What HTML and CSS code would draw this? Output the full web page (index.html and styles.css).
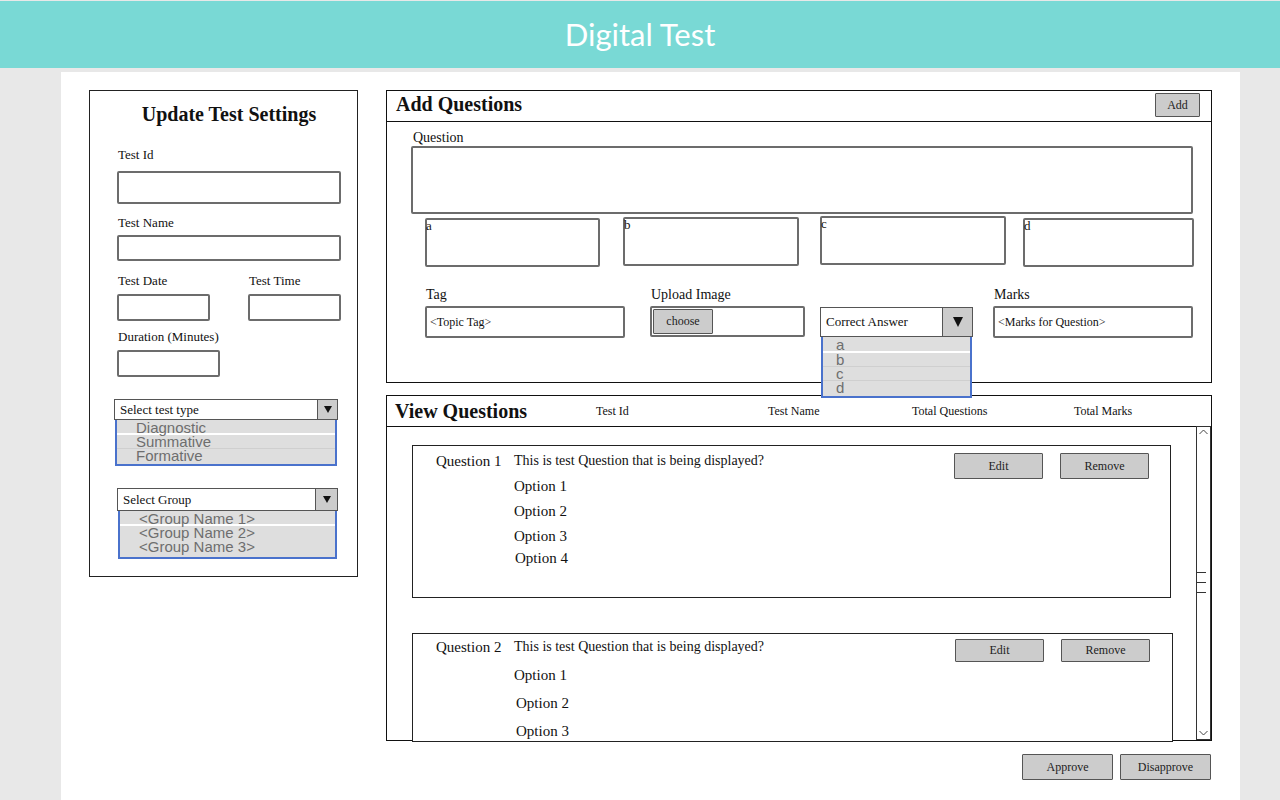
FILE: index.html
```html
<!DOCTYPE html>
<html lang="en">
<head>
<meta charset="utf-8">
<title>Digital Test</title>
<link rel="stylesheet" href="styles.css">
</head>
<body>
<header class="topbar">Digital Test</header>
<main class="page">
  <section class="settings">
    <h2 class="settings-title">Update Test Settings</h2>
    <div class="lbl lbl-id">Test Id</div>
    <div class="box box-id"></div>
    <div class="lbl lbl-name">Test Name</div>
    <div class="box box-name"></div>
    <div class="pair">
      <div class="pair-col">
        <div class="lbl">Test Date</div>
        <div class="box box-short"></div>
      </div>
      <div class="pair-col">
        <div class="lbl">Test Time</div>
        <div class="box box-short"></div>
      </div>
    </div>
    <div class="lbl lbl-dur">Duration (Minutes)</div>
    <div class="box box-dur"></div>
    <div class="select select-type"><span class="select-text">Select test type</span><span class="select-btn"><i class="tri"></i></span></div>
    <ul class="optlist optlist-type">
      <li class="split">Diagnostic</li>
      <li class="thin">Summative</li>
      <li>Formative</li>
    </ul>
    <div class="select select-group"><span class="select-text">Select Group</span><span class="select-btn"><i class="tri"></i></span></div>
    <ul class="optlist optlist-group">
      <li class="split">&lt;Group Name 1&gt;</li>
      <li>&lt;Group Name 2&gt;</li>
      <li>&lt;Group Name 3&gt;</li>
    </ul>
  </section>

  <div class="right">
    <section class="panel add">
      <div class="panel-head">
        <h2 class="panel-title">Add Questions</h2>
        <button class="btn btn-add">Add</button>
      </div>
      <div class="add-body">
        <div class="lbl-q">Question</div>
        <div class="box textarea"></div>
        <div class="opts">
          <div class="box opt opt-a">a</div>
          <div class="box opt opt-b">b</div>
          <div class="box opt opt-c">c</div>
          <div class="box opt opt-d">d</div>
        </div>
        <div class="meta">
          <div class="meta-col col-tag">
            <div class="lbl-m">Tag</div>
            <div class="box field">&lt;Topic Tag&gt;</div>
          </div>
          <div class="meta-col col-upload">
            <div class="lbl-m">Upload Image</div>
            <div class="box field upload-field"><button class="btn btn-choose">choose</button></div>
          </div>
          <div class="meta-col col-answer">
            <div class="select answer-select"><span class="select-text">Correct Answer</span><span class="select-btn big"><i class="tri tri-big"></i></span></div>
            <ul class="optlist answer-list">
              <li class="split">a</li>
              <li class="thin">b</li>
              <li class="thin">c</li>
              <li>d</li>
            </ul>
          </div>
          <div class="meta-col col-marks">
            <div class="lbl-m">Marks</div>
            <div class="box field">&lt;Marks for Question&gt;</div>
          </div>
        </div>
      </div>
    </section>

    <section class="panel view">
      <div class="panel-head view-head">
        <h2 class="panel-title">View Questions</h2>
        <span class="col-head">Test Id</span>
        <span class="col-head">Test Name</span>
        <span class="col-head">Total Questions</span>
        <span class="col-head">Total Marks</span>
      </div>
      <div class="view-body">
        <div class="view-list">
          <article class="card card-1">
            <div class="q-label">Question 1</div>
            <div class="q-main">
              <div class="q-text">This is test Question that is being displayed?</div>
              <div class="q-opt">Option 1</div>
              <div class="q-opt">Option 2</div>
              <div class="q-opt">Option 3</div>
              <div class="q-opt q-opt-last">Option 4</div>
            </div>
            <div class="q-actions">
              <button class="btn btn-card">Edit</button>
              <button class="btn btn-card">Remove</button>
            </div>
          </article>
          <article class="card card-2">
            <div class="q-label">Question 2</div>
            <div class="q-main">
              <div class="q-text">This is test Question that is being displayed?</div>
              <div class="q-opt">Option 1</div>
              <div class="q-opt q-opt-in">Option 2</div>
              <div class="q-opt q-opt-in">Option 3</div>
            </div>
            <div class="q-actions">
              <button class="btn btn-card">Edit</button>
              <button class="btn btn-card">Remove</button>
            </div>
          </article>
        </div>
        <div class="scrollbar">
          <svg class="sb-arrow" width="13" height="10" viewBox="0 0 13 10"><path d="M2.5 7 L6.5 3 L10.5 7" fill="none" stroke="#444" stroke-width="1"/></svg>
          <div class="sb-grip"><span></span><span></span><span></span></div>
          <svg class="sb-arrow sb-arrow-down" width="13" height="10" viewBox="0 0 13 10"><path d="M2.5 3 L6.5 7 L10.5 3" fill="none" stroke="#444" stroke-width="1"/></svg>
        </div>
      </div>
    </section>

    <div class="actions">
      <button class="btn btn-act">Approve</button>
      <button class="btn btn-act">Disapprove</button>
    </div>
  </div>
</main>
</body>
</html>
```

FILE: styles.css
```css
* { box-sizing: border-box; }

html, body {
  margin: 0;
  padding: 0;
}

body {
  background: #e8e8e8;
  font-family: "Liberation Serif", "Times New Roman", serif;
  color: #111;
  height: 800px;
  overflow: hidden;
}

.topbar {
  margin-top: 1px;
  height: 67px;
  background: #79d9d5;
  color: #fff;
  font-family: Lato, "Open Sans", sans-serif;
  font-size: 31px;
  line-height: 67px;
  text-align: center;
}

.page {
  width: 1179px;
  margin: 4px 0 0 61px;
  height: 732px;
  background: #fff;
  padding: 18px 28px 0 28px;
  display: grid;
  grid-template-columns: 269px 826px;
  column-gap: 28px;
  align-items: start;
}

/* ---------- shared ---------- */
.box {
  border: 2px solid #6c6c6c;
  border-radius: 2px;
  background: #fff;
}

.btn {
  font-family: "Liberation Serif", "Times New Roman", serif;
  font-size: 12px;
  color: #222;
  background: #cccccc;
  border: 1.5px solid #555;
  border-radius: 1px;
  padding: 0;
  cursor: pointer;
}

.select {
  display: flex;
  align-items: stretch;
  border: 1.5px solid #555;
  background: #fff;
  font-size: 13px;
}

.select-text {
  flex: 1;
  display: flex;
  align-items: center;
  padding-left: 5px;
}

.select-btn {
  width: 20px;
  background: #cccccc;
  border-left: 1.5px solid #555;
  display: flex;
  align-items: center;
  justify-content: center;
}

.tri {
  display: block;
  width: 0;
  height: 0;
  border-left: 4px solid transparent;
  border-right: 4px solid transparent;
  border-top: 7px solid #111;
}

.tri-big {
  border-left-width: 5.5px;
  border-right-width: 5.5px;
  border-top-width: 10px;
}

.optlist {
  list-style: none;
  margin: 0;
  padding: 0;
  background: #dedede;
  border: 2px solid #4a72cc;
  border-top: 0;
  font-family: "Liberation Sans", Arial, sans-serif;
  font-size: 15px;
  color: #6e6e6e;
}

.optlist li {
  height: 14px;
  line-height: 13px;
  overflow: visible;
  white-space: nowrap;
}

.optlist li.split {
  border-bottom: 2px solid #fff;
}

.optlist li.thin {
  border-bottom: 1px solid #cfcfcf;
}

/* ---------- left settings panel ---------- */
.settings {
  height: 487px;
  border: 1px solid #222;
  background: #fff;
}

.settings-title {
  margin: 11px 0 0 0;
  padding-left: 11px;
  font-size: 20px;
  line-height: 24px;
  font-weight: bold;
  text-align: center;
}

.lbl {
  font-size: 13px;
  line-height: 16px;
  margin-left: 28px;
}

.lbl-id { margin-top: 21px; }
.box-id { margin: 8px 0 0 27px; width: 224px; height: 33px; }
.lbl-name { margin-top: 11px; }
.box-name { margin: 4px 0 0 27px; width: 224px; height: 26px; }

.pair {
  margin-top: 12px;
  margin-left: 27px;
  display: grid;
  grid-template-columns: 131px 93px;
}

.pair .lbl { margin-left: 1px; }
.box-short { margin-top: 5px; width: 93px; height: 27px; }

.lbl-dur { margin-top: 8px; }
.box-dur { margin: 5px 0 0 27px; width: 103px; height: 27px; }

.select-type {
  margin: 22px 0 0 24px;
  width: 224px;
  height: 21px;
}

.optlist-type {
  margin-left: 25px;
  width: 222px;
  height: 46px;
}

.optlist-type li { padding-left: 19px; }
.optlist-type li.split { height: 15px; line-height: 15px; }

.select-group {
  margin: 22px 0 0 27px;
  width: 221px;
  height: 23px;
}

.select-group .select-btn { width: 22px; }

.optlist-group {
  margin-left: 28px;
  width: 219px;
  height: 48px;
}

.optlist-group li { padding-left: 19px; }
.optlist-group li.split { height: 15px; line-height: 15px; }

/* ---------- right column ---------- */
.right {
  display: flex;
  flex-direction: column;
}

.panel {
  border: 1px solid #111;
  background: #fff;
}

.panel-head {
  height: 31px;
  border-bottom: 1px solid #111;
  display: flex;
  align-items: flex-start;
}

.panel-title {
  margin: 0;
  font-size: 20px;
  line-height: 26px;
  font-weight: bold;
  padding-left: 9px;
}

.add { height: 293px; }

.btn-add {
  margin: 2px 11px 0 auto;
  width: 45px;
  height: 24px;
}

.add-body {
  padding-left: 24px;
}

.lbl-q {
  font-size: 14px;
  line-height: 16px;
  margin: 8px 0 0 2px;
}

.textarea {
  width: 782px;
  height: 68px;
}

.opts {
  margin: 4px 0 0 14px;
  height: 49px;
  display: flex;
  align-items: flex-start;
}

.opt {
  height: 49px;
  font-size: 13px;
  line-height: 11px;
  padding: 0;
  text-indent: -1px;
}

.opt-a { width: 175px; }
.opt-b { width: 176px; margin-left: 23px; margin-top: -1px; }
.opt-c { width: 186px; margin-left: 21px; margin-top: -2px; }
.opt-d { width: 171px; margin-left: 17px; }

.meta {
  margin: 20px 0 0 14px;
  display: flex;
  align-items: flex-end;
}

.lbl-m {
  font-size: 14px;
  line-height: 16px;
  margin: 0 0 3px 1px;
}

.field {
  height: 32px;
  font-size: 12px;
  display: flex;
  align-items: center;
  padding-left: 3px;
}

.col-tag { width: 200px; }
.col-upload { width: 155px; margin-left: 25px; }
.col-upload .field { height: 31px; margin-bottom: 1px; align-items: flex-start; padding: 1px; }
.btn-choose { width: 60px; height: 25px; }

.col-answer {
  width: 153px;
  margin-left: 15px;
  position: relative;
}

.answer-select {
  height: 30px;
  margin-bottom: 1px;
}

.answer-select .select-text { padding-left: 5px; }

.select-btn.big { width: 30px; }

.answer-list {
  position: absolute;
  top: 100%;
  left: 1px;
  width: 151px;
  height: 61px;
  margin-top: -1px;
  z-index: 2;
}

.answer-list li { padding-left: 13px; }
.answer-list li.split { height: 16px; line-height: 16px; }

.col-marks { width: 200px; margin-left: 20px; }

/* ---------- view panel ---------- */
.view {
  margin-top: 12px;
  height: 346px;
}

.view-head {
  display: grid;
  grid-template-columns: 209px 172px 144px 162px auto;
  align-items: center;
  height: 31px;
}

.view-head .panel-title { padding-left: 8px; }

.col-head {
  font-size: 12px;
  line-height: 16px;
}

.view-body {
  height: 313px;
  display: flex;
}

.view-list {
  flex: 1;
  padding: 18px 0 0 25px;
}

.card {
  border: 1px solid #222;
  background: #fff;
  display: flex;
  align-items: flex-start;
  padding-left: 23px;
}

.card-1 { width: 759px; height: 153px; padding-top: 5px; padding-right: 21px; }
.card-2 { width: 761px; height: 109px; margin-top: 35px; padding-top: 3px; padding-right: 22px; }

.q-label {
  width: 78px;
  font-size: 15px;
  line-height: 20px;
}

.q-main { flex: 1; }

.q-text {
  font-size: 14px;
  line-height: 20px;
}

.q-opt {
  font-size: 15px;
  line-height: 25px;
}

.card-1 .q-text { margin-bottom: 3px; }
.card-1 .q-opt-last { margin-top: -3px; padding-left: 1px; }

.card-2 .q-text { margin-bottom: 4px; }
.card-2 .q-opt { line-height: 28px; }
.card-2 .q-opt-in { padding-left: 2px; }

.q-actions {
  display: flex;
  gap: 17px;
  margin-top: 2px;
}

.btn-card { width: 89px; height: 26px; }
.card-2 .btn-card { height: 23px; }

.scrollbar {
  width: 15px;
  margin-top: -1px;
  border: 1px solid #333;
  display: flex;
  flex-direction: column;
  align-items: center;
  justify-content: flex-start;
  background: #fff;
}

.sb-arrow { display: block; }
.sb-arrow-down { margin-top: auto; margin-bottom: 1px; }

.sb-grip {
  width: 13px;
  display: flex;
  flex-direction: column;
  align-items: flex-start;
  gap: 9px;
  margin-top: 135px;
}

.sb-grip span {
  display: block;
  width: 9px;
  height: 1px;
  background: #333;
}

.actions {
  display: flex;
  justify-content: flex-end;
  gap: 7px;
  margin-top: 13px;
  padding-right: 1px;
}

.btn-act { width: 91px; height: 26px; }
```
